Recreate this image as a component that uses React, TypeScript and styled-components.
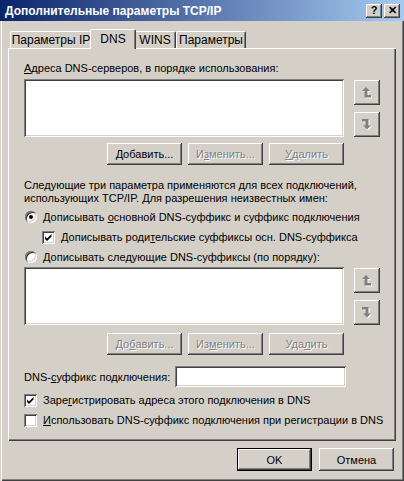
import React from 'react'
import styled, { createGlobalStyle, css } from 'styled-components'

const face = '#d4d0c8'
const shadow = '#808080'
const dark = '#404040'

const GlobalStyle = createGlobalStyle`
  html, body {
    margin: 0;
    padding: 0;
    background: ${face};
  }
  body {
    font-family: 'Liberation Sans', Arial, sans-serif;
    font-size: 11px;
    color: #000;
  }
  * {
    box-sizing: border-box;
  }
`

const raised = css`
  box-shadow:
    inset -1px -1px 0 ${dark},
    inset 1px 1px 0 #fff,
    inset -2px -2px 0 ${shadow},
    inset 2px 2px 0 ${face};
`
const sunken = css`
  box-shadow:
    inset 1px 1px 0 ${shadow},
    inset -1px -1px 0 #fff,
    inset 2px 2px 0 ${dark},
    inset -2px -2px 0 ${face};
`

const Window = styled.div`
  width: 404px;
  height: 481px;
  display: flex;
  flex-direction: column;
  padding: 0 3px 3px;
  background: ${face};
  box-shadow:
    inset 1px 0 0 ${face},
    inset 2px 0 0 #fff,
    inset -1px -1px 0 ${dark},
    inset -2px -2px 0 ${shadow};
`
const TitleBar = styled.div`
  height: 21px;
  margin: 0 -3px;
  padding: 0 4px 0 5px;
  display: flex;
  align-items: center;
  gap: 2px;
  background: linear-gradient(90deg, #0a246a, #a6caf0);
`
const TitleText = styled.div`
  flex: 1;
  color: #fff;
  font-weight: bold;
  font-size: 12px;
  white-space: nowrap;
`
const CaptionButton = styled.div`
  width: 16px;
  height: 14px;
  display: flex;
  align-items: center;
  justify-content: center;
  background: ${face};
  font-weight: bold;
  font-size: 11px;
  line-height: 1;
  ${raised}
`
const Body = styled.div`
  flex: 1;
  display: flex;
  flex-direction: column;
  padding: 8px 5px 7px;
`
const TabStrip = styled.div`
  height: 19px;
  display: flex;
  align-items: flex-end;
  padding-left: 2px;
  position: relative;
  z-index: 1;
`
const Tab = styled.div<{ $active?: boolean; $w: number }>`
  width: ${(p) => p.$w}px;
  height: 17px;
  display: flex;
  align-items: center;
  justify-content: center;
  white-space: nowrap;
  font-size: 12px;
  background: ${face};
  border-top: 1px solid #fff;
  border-left: 1px solid #fff;
  border-right: 1px solid ${dark};
  border-radius: 2px 2px 0 0;
  box-shadow: inset -1px 0 0 ${shadow};
  ${(p) =>
    p.$active &&
    css`
      width: ${p.$w + 4}px;
      height: 20px;
      margin: 0 -2px -1px;
      padding-bottom: 2px;
      position: relative;
      z-index: 1;
    `}
`
const Panel = styled.div`
  flex: 1;
  display: flex;
  flex-direction: column;
  padding: 14px 16px 0;
  background: ${face};
  box-shadow:
    inset 1px 1px 0 #fff,
    inset -1px -1px 0 ${dark},
    inset -2px -2px 0 ${shadow};
`
const Label = styled.div`
  line-height: 13px;
  margin-bottom: 4px;
  white-space: nowrap;
`
const Key = styled.span`
  text-decoration: underline;
`
const ListRow = styled.div`
  display: flex;
  gap: 10px;
  align-items: flex-start;
`
const ListBox = styled.div`
  width: 320px;
  height: 58px;
  background: #fff;
  ${sunken}
`
const SideButtons = styled.div`
  display: flex;
  flex-direction: column;
  gap: 7px;
  padding-top: 1px;
`
const ArrowButton = styled.div`
  width: 26px;
  height: 25px;
  display: flex;
  align-items: center;
  justify-content: center;
  background: ${face};
  ${raised}
`
const ButtonRow = styled.div<{ $top: number }>`
  width: 320px;
  display: flex;
  justify-content: flex-end;
  gap: 6px;
  margin-top: ${(p) => p.$top}px;
`
const PushButton = styled.div<{ $disabled?: boolean; $default?: boolean; $tall?: boolean }>`
  width: 75px;
  height: ${(p) => (p.$tall ? 23 : 22)}px;
  display: flex;
  align-items: center;
  justify-content: center;
  white-space: nowrap;
  background: ${face};
  ${raised}
  ${(p) =>
    p.$disabled &&
    css`
      color: ${shadow};
      text-shadow: 1px 1px 0 #fff;
    `}
  ${(p) =>
    p.$default &&
    css`
      box-shadow:
        inset 0 0 0 1px #000,
        inset -2px -2px 0 ${dark},
        inset 2px 2px 0 #fff,
        inset -3px -3px 0 ${shadow};
    `}
`
const Paragraph = styled.div`
  line-height: 13px;
  margin-top: 14px;
  margin-bottom: 2px;
  white-space: nowrap;
`
const OptionRow = styled.div<{ $indent?: number }>`
  height: 20px;
  display: flex;
  align-items: center;
  gap: 6px;
  padding-left: ${(p) => p.$indent ?? 0}px;
  white-space: nowrap;
`
const Radio = styled.span<{ $checked?: boolean }>`
  width: 12px;
  height: 12px;
  margin-left: 1px;
  border-radius: 50%;
  background: #fff;
  display: flex;
  align-items: center;
  justify-content: center;
  box-shadow:
    inset 1px 1px 0 ${shadow},
    inset -1px -1px 0 #fff,
    inset 2px 2px 0 ${dark},
    inset -2px -2px 0 ${face};
  &::after {
    content: '';
    width: 4px;
    height: 4px;
    border-radius: 50%;
    background: ${(p) => (p.$checked ? '#000' : 'transparent')};
  }
`
const Box = styled.span`
  width: 13px;
  height: 13px;
  flex: none;
  display: block;
  background: #fff;
  ${sunken}
`
const SuffixRow = styled.div`
  display: flex;
  align-items: center;
  margin-top: 11px;
  margin-bottom: 3px;
`
const SuffixLabel = styled.div`
  flex: 0 0 151px;
  white-space: nowrap;
`
const TextField = styled.div`
  width: 171px;
  height: 21px;
  background: #fff;
  ${sunken}
`
const Footer = styled.div`
  display: flex;
  justify-content: flex-end;
  gap: 7px;
  padding: 7px 2px 0 0;
`

const upPath = 'M4 0 L8 4 H5.5 V8 H9 V10.5 H2.5 V4 H0 Z'
const downPath = 'M5 10.5 L1 6.5 H3.5 V2.5 H0 V0 H6.5 V6.5 H9 Z'

const MoveIcon: React.FC<{ down?: boolean }> = ({ down }) => {
  const d = down ? downPath : upPath
  return (
    <svg width="11" height="12" viewBox="0 0 11 12">
      <path d={d} fill="#fff" transform="translate(1 1)" />
      <path d={d} fill={shadow} />
    </svg>
  )
}

const CheckBox: React.FC<{ checked?: boolean }> = ({ checked }) => (
  <Box>
    {checked && (
      <svg width="13" height="13" viewBox="0 0 13 13">
        <path d="M3 5.5 L5 7.5 L9.5 3 V5.5 L5 10 L3 8 Z" fill="#000" />
      </svg>
    )}
  </Box>
)

const ServerList: React.FC = () => (
  <ListRow>
    <ListBox />
    <SideButtons>
      <ArrowButton>
        <MoveIcon />
      </ArrowButton>
      <ArrowButton>
        <MoveIcon down />
      </ArrowButton>
    </SideButtons>
  </ListRow>
)

export default function App() {
  return (
    <>
      <GlobalStyle />
      <Window>
        <TitleBar>
          <TitleText>Дополнительные параметры TCP/IP</TitleText>
          <CaptionButton>?</CaptionButton>
          <CaptionButton>✕</CaptionButton>
        </TitleBar>
        <Body>
          <TabStrip>
            <Tab $w={82}>Параметры IP</Tab>
            <Tab $w={42} $active>
              DNS
            </Tab>
            <Tab $w={42}>WINS</Tab>
            <Tab $w={70}>Параметры</Tab>
          </TabStrip>
          <Panel>
            <Label>
              <Key>А</Key>дреса DNS-серверов, в порядке использования:
            </Label>
            <ServerList />
            <ButtonRow $top={6}>
              <PushButton>
                <Key>Д</Key>обавить...
              </PushButton>
              <PushButton $disabled>
                И<Key>з</Key>менить...
              </PushButton>
              <PushButton $disabled>
                <Key>У</Key>далить
              </PushButton>
            </ButtonRow>
            <Paragraph>
              Следующие три параметра применяются для всех подключений,
              <br />
              использующих TCP/IP. Для разрешения неизвестных имен:
            </Paragraph>
            <OptionRow>
              <Radio $checked />
              <span>
                Дописывать <Key>о</Key>сновной DNS-суффикс и суффикс подключения
              </span>
            </OptionRow>
            <OptionRow $indent={18}>
              <CheckBox checked />
              <span>
                Дописывать роди<Key>т</Key>ельские суффиксы осн. DNS-суффикса
              </span>
            </OptionRow>
            <OptionRow>
              <Radio />
              <span>
                Дописывать сле<Key>д</Key>ующие DNS-суффиксы (по порядку):
              </span>
            </OptionRow>
            <ServerList />
            <ButtonRow $top={8}>
              <PushButton $disabled>
                До<Key>б</Key>авить...
              </PushButton>
              <PushButton $disabled>
                Из<Key>м</Key>енить...
              </PushButton>
              <PushButton $disabled>
                Уда<Key>л</Key>ить
              </PushButton>
            </ButtonRow>
            <SuffixRow>
              <SuffixLabel>
                DNS-<Key>с</Key>уффикс подключения:
              </SuffixLabel>
              <TextField />
            </SuffixRow>
            <OptionRow>
              <CheckBox checked />
              <span>
                Заре<Key>г</Key>истрировать адреса этого подключения в DNS
              </span>
            </OptionRow>
            <OptionRow>
              <CheckBox />
              <span>
                <Key>И</Key>спользовать DNS-суффикс подключения при регистрации в DNS
              </span>
            </OptionRow>
          </Panel>
          <Footer>
            <PushButton $default $tall>
              OK
            </PushButton>
            <PushButton $tall>Отмена</PushButton>
          </Footer>
        </Body>
      </Window>
    </>
  )
}
